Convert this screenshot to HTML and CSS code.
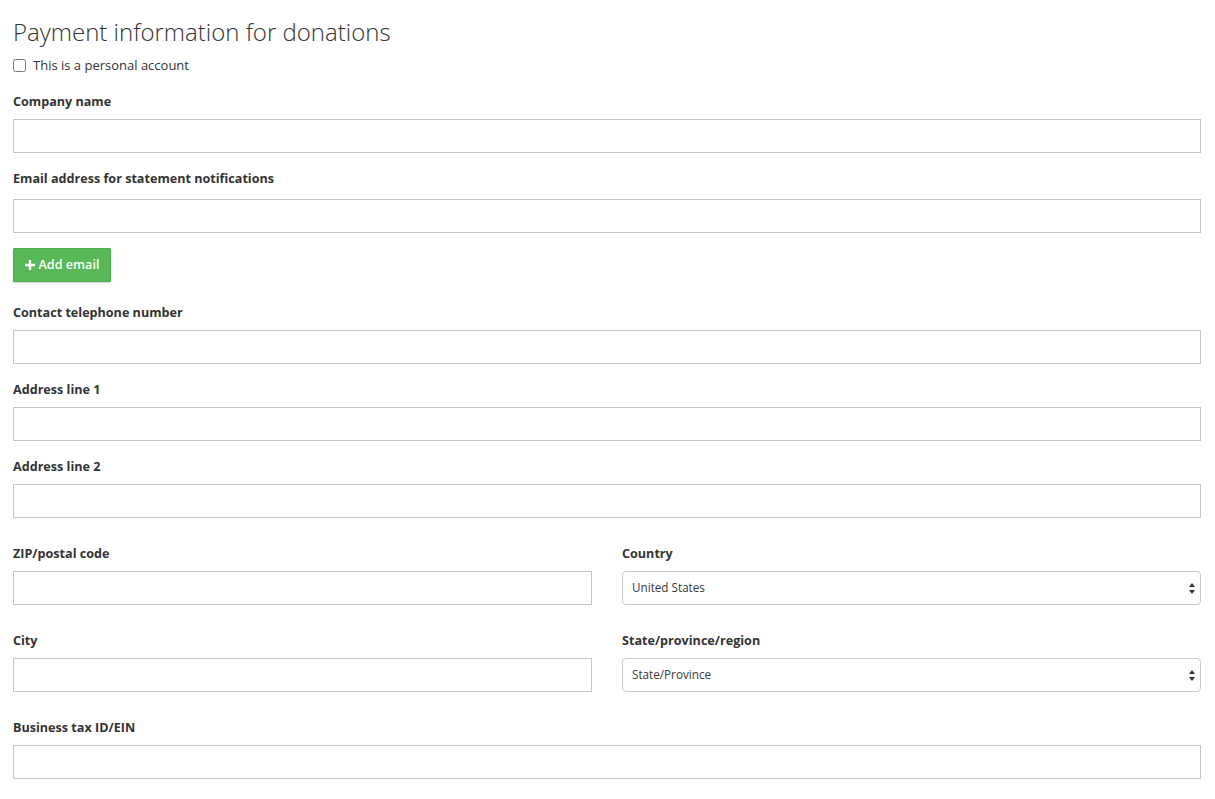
FILE: index.html
```html
<!DOCTYPE html>
<html lang="en">
<head>
<meta charset="utf-8">
<title>Payment information for donations</title>
<link rel="stylesheet" href="styles.css">
</head>
<body>
<form class="page">
  <h1 class="title">Payment information for donations</h1>
  <label class="check">
    <input type="checkbox" class="check-box">
    <span>This is a personal account</span>
  </label>

  <div class="group">
    <label class="label">Company name</label>
    <input class="input" type="text">
  </div>

  <div class="group">
    <label class="label">Email address for statement notifications</label>
    <input class="input input-email" type="text">
  </div>

  <div class="group group-btn">
    <button type="button" class="btn-add">
      <svg class="plus" viewBox="0 0 10 10" width="10" height="10"><path d="M3.8 0h2.4v3.8H10v2.4H6.2V10H3.8V6.2H0V3.8h3.8z" fill="#fff"/></svg>
      Add email
    </button>
  </div>

  <div class="group">
    <label class="label">Contact telephone number</label>
    <input class="input" type="text">
  </div>

  <div class="group">
    <label class="label">Address line 1</label>
    <input class="input" type="text">
  </div>

  <div class="group group-last">
    <label class="label">Address line 2</label>
    <input class="input" type="text">
  </div>

  <div class="row">
    <div class="group">
      <label class="label">ZIP/postal code</label>
      <input class="input" type="text">
    </div>
    <div class="group">
      <label class="label">Country</label>
      <div class="select">
        <span>United States</span>
        <svg class="arrows" viewBox="0 0 6 11" width="6" height="11"><path d="M3 0L6 4H0z M3 11L0 7h6z" fill="#333"/></svg>
      </div>
    </div>
  </div>

  <div class="row">
    <div class="group">
      <label class="label">City</label>
      <input class="input" type="text">
    </div>
    <div class="group">
      <label class="label">State/province/region</label>
      <div class="select">
        <span>State/Province</span>
        <svg class="arrows" viewBox="0 0 6 11" width="6" height="11"><path d="M3 0L6 4H0z M3 11L0 7h6z" fill="#333"/></svg>
      </div>
    </div>
  </div>

  <div class="group">
    <label class="label">Business tax ID/EIN</label>
    <input class="input" type="text">
  </div>
</form>
</body>
</html>
```

FILE: styles.css
```css
html, body {
  margin: 0;
  padding: 0;
  background: #fff;
}

body {
  font-family: "Open Sans", "Liberation Sans", sans-serif;
  color: #333;
}

.page {
  padding: 0 14px 0 13px;
  display: flex;
  flex-direction: column;
}

.title {
  font-size: 24px;
  font-weight: 300;
  line-height: 30px;
  margin: 17px 0 0 0;
  color: #333;
}

.check {
  display: flex;
  align-items: center;
  gap: 7px;
  font-size: 13px;
  line-height: 20px;
  margin: 8px 0 16px 0;
  color: #333;
}

.check-box {
  margin: 0;
  width: 13px;
  height: 13px;
}

.group {
  display: flex;
  flex-direction: column;
  margin-bottom: 15px;
}

.group-last {
  margin-bottom: 25px;
}

.row {
  display: grid;
  grid-template-columns: 1fr 1fr;
  column-gap: 30px;
  margin-bottom: 10px;
}

.label {
  font-size: 12.6px;
  font-weight: 700;
  line-height: 20px;
  margin-top: 1px;
  margin-bottom: 7px;
  color: #333;
}

.input {
  box-sizing: border-box;
  height: 34px;
  margin: 0;
  border: 1px solid #c6c6c6;
  border-radius: 0;
  background: #fff;
  font-family: inherit;
  font-size: 13px;
  padding: 6px 10px;
  outline: none;
}

.input-email {
  margin-top: 3px;
}

.group-btn {
  margin-bottom: 20px;
}

.btn-add {
  align-self: flex-start;
  box-sizing: border-box;
  height: 34px;
  width: 98px;
  padding: 0 0 1px 0;
  display: flex;
  align-items: center;
  justify-content: center;
  gap: 4px;
  background: #58b858;
  border: 1px solid #4cae4c;
  border-radius: 1px;
  box-shadow: 0 1px 2px rgba(0,0,0,0.2);
  color: #fff;
  font-family: inherit;
  font-size: 12.6px;
  font-weight: 600;
  cursor: pointer;
}

.plus {
  display: block;
}

.select {
  box-sizing: border-box;
  height: 34px;
  border: 1px solid #ccc;
  border-radius: 4px;
  background: #fff;
  display: flex;
  align-items: center;
  justify-content: space-between;
  padding: 0 5px 3px 9px;
  font-size: 11.7px;
  color: #3a3a3a;
}

.arrows {
  display: block;
  margin-top: 3px;
}
```
